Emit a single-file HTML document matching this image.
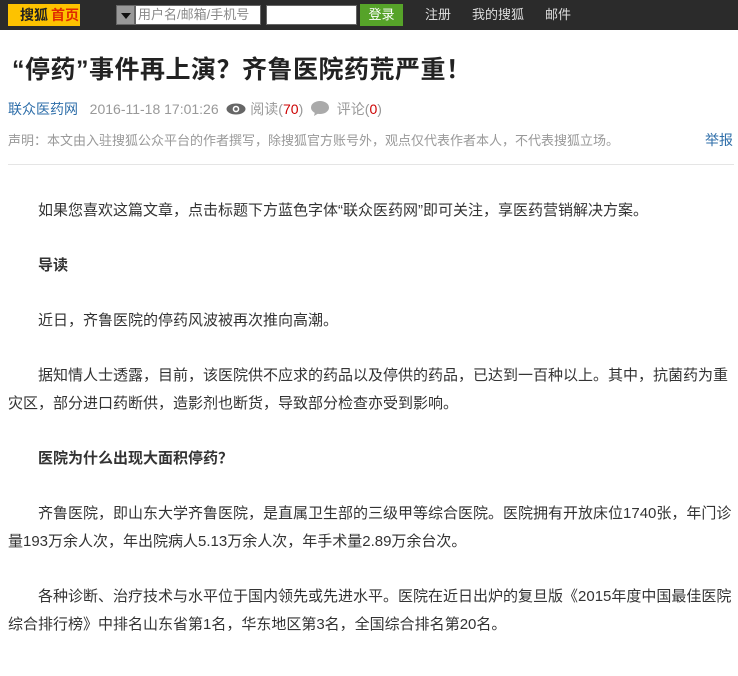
<!DOCTYPE html>
<html><head><meta charset="utf-8"><style>
*{margin:0;padding:0;box-sizing:border-box}
body{width:738px;height:676px;overflow:hidden;background:#fff;font-family:"Liberation Sans","Noto Sans CJK SC",sans-serif;color:#333}
.bar{height:30px;background:#2b2b2b;position:relative}
.bar>*{position:absolute;white-space:nowrap}
.logo{left:8px;top:4px;width:72px;height:22px;background:#fdc200;font-size:14px;font-weight:bold;line-height:22px;padding-left:12px;color:#222}
.logo span{color:#e02b00;margin-left:3px}
.dd{left:116px;top:5px;width:19px;height:20px;background:#999;border:1px solid #666}
.dd:after{content:"";position:absolute;left:4px;top:7px;border:5px solid transparent;border-top:6px solid #111}
.in1{left:135px;top:5px;width:126px;height:20px;background:#fff;border:1px solid #666;font-size:13px;color:#888;line-height:18px;padding-left:2px}
.in2{left:266px;top:5px;width:91px;height:20px;background:#fff;border:1px solid #666}
.btn{left:360px;top:4px;width:43px;height:22px;background:#56a329;color:#fff;font-size:13px;text-align:center;line-height:22px}
.lk{top:0;line-height:30px;color:#ddd;font-size:13px}
h1{position:absolute;left:12px;top:50px;font-size:25px;font-weight:bold;color:#222;white-space:nowrap;letter-spacing:0.5px}
.meta{position:absolute;left:8px;top:99px;font-size:14px;color:#999;white-space:nowrap}
.meta a{color:#2e6ea9;text-decoration:none}
.meta b{color:#c00;font-weight:normal}
.dec{position:absolute;left:8px;top:130px;font-size:13px;color:#999;white-space:nowrap}
.rep{position:absolute;right:5px;top:130px;font-size:14px;color:#2e6ea9}
.hr{position:absolute;left:8px;right:4px;top:164px;border-top:1px solid #e5e5e5}
.art{position:absolute;left:8px;width:728px;top:197px;font-size:15px;line-height:28px;color:#333}
.art p{text-indent:2em;margin-bottom:27px}
</style></head><body>
<div class="bar">
<div class="logo">搜狐<span>首页</span></div>
<div class="dd"></div>
<div class="in1">用户名/邮箱/手机号</div>
<div class="in2"></div>
<div class="btn">登录</div>
<div class="lk" style="left:425px">注册</div>
<div class="lk" style="left:472px">我的搜狐</div>
<div class="lk" style="left:545px">邮件</div>
</div>
<h1>“停药”事件再上演？齐鲁医院药荒严重！</h1>
<div class="meta"><a>联众医药网</a>&nbsp;&nbsp; 2016-11-18 17:01:26 &nbsp;<svg width="20" height="12" viewBox="0 0 20 12" style="vertical-align:-1px"><ellipse cx="10" cy="6" rx="9.5" ry="5.5" fill="#666"/><circle cx="10" cy="6" r="3.3" fill="#fff"/><circle cx="10" cy="6" r="1.8" fill="#666"/></svg> 阅读(<b>70</b>) &nbsp;<svg width="18" height="15" viewBox="0 0 18 15" style="vertical-align:-2px"><ellipse cx="9" cy="6.5" rx="9" ry="6.5" fill="#aaa"/><path d="M4 11 L3 15 L8 12z" fill="#aaa"/></svg>&nbsp; 评论(<b>0</b>)</div>
<div class="dec">声明：本文由入驻搜狐公众平台的作者撰写，除搜狐官方账号外，观点仅代表作者本人，不代表搜狐立场。</div>
<div class="rep">举报</div>
<div class="hr"></div>
<div class="art">
<p>如果您喜欢这篇文章，点击标题下方蓝色字体“联众医药网”即可关注，享医药营销解决方案。</p>
<p><b>导读</b></p>
<p>近日，齐鲁医院的停药风波被再次推向高潮。</p>
<p>据知情人士透露，目前，该医院供不应求的药品以及停供的药品，已达到一百种以上。其中，抗菌药为重灾区，部分进口药断供，造影剂也断货，导致部分检查亦受到影响。</p>
<p><b>医院为什么出现大面积停药？</b></p>
<p>齐鲁医院，即山东大学齐鲁医院，是直属卫生部的三级甲等综合医院。医院拥有开放床位1740张，年门诊量193万余人次，年出院病人5.13万余人次，年手术量2.89万余台次。</p>
<p>各种诊断、治疗技术与水平位于国内领先或先进水平。医院在近日出炉的复旦版《2015年度中国最佳医院综合排行榜》中排名山东省第1名，华东地区第3名，全国综合排名第20名。</p>
</div>
</body></html>
